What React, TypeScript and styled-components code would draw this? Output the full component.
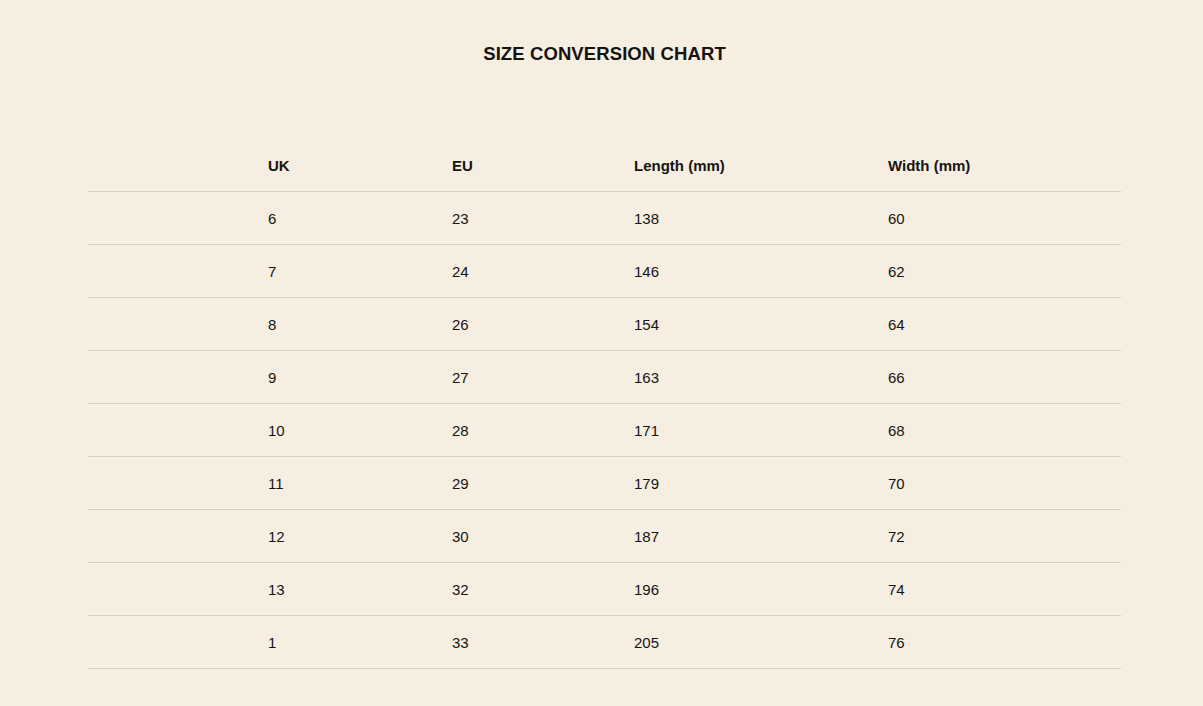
import React from "react";
import styled, { createGlobalStyle } from "styled-components";

const Global = createGlobalStyle`
  html, body { margin: 0; padding: 0; background: #f6eee0; }
  body { font-family: "Liberation Sans", Arial, sans-serif; color: #161412; }
`;

const Page = styled.main`
  display: flex;
  flex-direction: column;
  align-items: stretch;
  padding: 40px 82px 0 88px;
  min-height: 706px;
  box-sizing: border-box;
`;

const Title = styled.h1`
  margin: 0;
  text-align: center;
  font-size: 18.5px;
  line-height: 28px;
  font-weight: 700;
  letter-spacing: 0.1px;
`;

const Table = styled.table`
  margin-top: 70px;
  width: 100%;
  border-collapse: collapse;
  table-layout: fixed;
`;

const Col = styled.col<{ $w?: number }>`
  width: ${(p) => (p.$w ? `${p.$w}px` : "auto")};
`;

const Row = styled.tr`
  border-bottom: 1px solid #d8d0c3;
`;

const HeadCell = styled.th`
  height: 53px;
  padding: 0;
  padding-top: 2px;
  text-align: left;
  font-size: 15px;
  font-weight: 700;
  vertical-align: middle;
  box-sizing: border-box;
`;

const Cell = styled.td`
  height: 53px;
  padding: 0;
  padding-top: 2px;
  text-align: left;
  font-size: 15px;
  font-weight: 400;
  vertical-align: middle;
  box-sizing: border-box;
`;

const rows: [string, string, string, string][] = [
  ["6", "23", "138", "60"],
  ["7", "24", "146", "62"],
  ["8", "26", "154", "64"],
  ["9", "27", "163", "66"],
  ["10", "28", "171", "68"],
  ["11", "29", "179", "70"],
  ["12", "30", "187", "72"],
  ["13", "32", "196", "74"],
  ["1", "33", "205", "76"],
];

export default function App() {
  return (
    <>
      <Global />
      <Page>
        <Title>SIZE CONVERSION CHART</Title>
        <Table>
          <colgroup>
            <Col $w={180} />
            <Col $w={184} />
            <Col $w={182} />
            <Col $w={254} />
            <Col />
          </colgroup>
          <thead>
            <Row>
              <HeadCell />
              <HeadCell>UK</HeadCell>
              <HeadCell>EU</HeadCell>
              <HeadCell>Length (mm)</HeadCell>
              <HeadCell>Width (mm)</HeadCell>
            </Row>
          </thead>
          <tbody>
            {rows.map((r) => (
              <Row key={r[0] + r[1]}>
                <Cell />
                {r.map((v, i) => (
                  <Cell key={i}>{v}</Cell>
                ))}
              </Row>
            ))}
          </tbody>
        </Table>
      </Page>
    </>
  );
}
